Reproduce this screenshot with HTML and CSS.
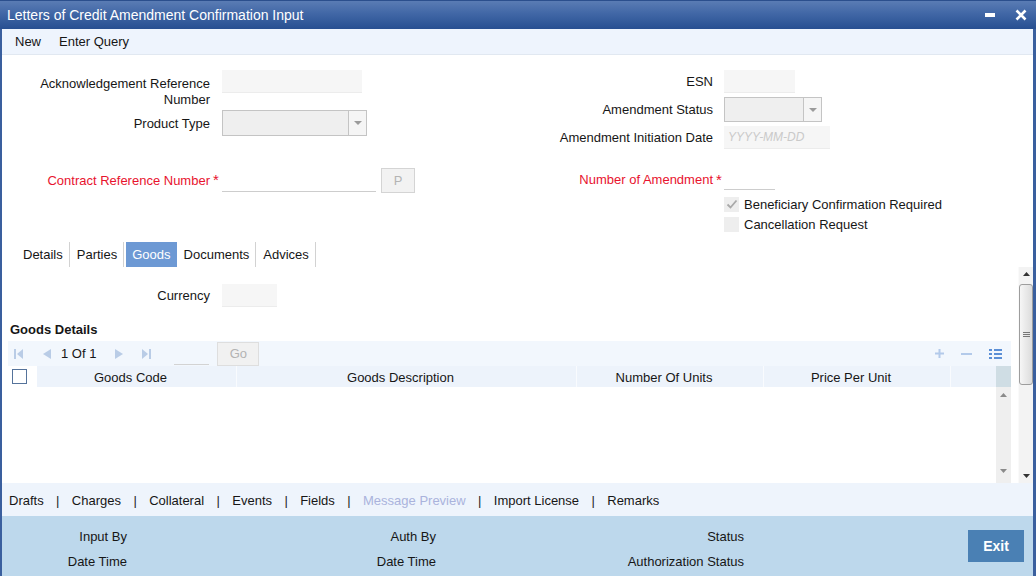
FILE: index.html
```html
<!DOCTYPE html>
<html lang="en">
<head>
  <meta charset="UTF-8">
  <meta name="viewport" content="width=device-width, initial-scale=1.0">
  <title>Letters of Credit Amendment Confirmation Input</title>
  <link rel="stylesheet" href="styles.css">
</head>
<body>
  <div class="window">
    <div class="titlebar">
      <span class="title">Letters of Credit Amendment Confirmation Input</span>
      <div class="win-buttons">
        <svg width="10" height="4" viewBox="0 0 10 4"><rect width="10" height="4" fill="#fff"/></svg>
        <svg width="12" height="12" viewBox="0 0 12 12"><path d="M1.5 1.5 L10.5 10.5 M10.5 1.5 L1.5 10.5" stroke="#fff" stroke-width="2.6"/></svg>
      </div>
    </div>

    <div class="frame">
      <div class="toolbar">
        <span>New</span>
        <span>Enter Query</span>
      </div>

      <div class="header-form">
        <div class="form-row">
          <div class="col col-left">
            <div class="field field-ack">
              <label class="lbl">Acknowledgement Reference<br>Number</label>
              <span class="mark"></span>
              <span class="input ack-input"></span>
            </div>
            <div class="field">
              <label class="lbl">Product Type</label>
              <span class="mark"></span>
              <span class="select product-select"><span class="select-btn"></span></span>
            </div>
          </div>
          <div class="col col-right">
            <div class="field">
              <label class="lbl">ESN</label>
              <span class="mark"></span>
              <span class="input esn-input"></span>
            </div>
            <div class="field">
              <label class="lbl">Amendment Status</label>
              <span class="mark"></span>
              <span class="select status-select"><span class="select-btn"></span></span>
            </div>
            <div class="field">
              <label class="lbl">Amendment Initiation Date</label>
              <span class="mark"></span>
              <span class="input date-input">YYYY-MM-DD</span>
            </div>
          </div>
        </div>

        <div class="form-row form-mid">
          <div class="col col-left">
            <div class="field">
              <label class="lbl required">Contract Reference Number</label>
              <span class="mark">*</span>
              <span class="line-input contract-input"></span>
              <span class="btn-p">P</span>
            </div>
          </div>
          <div class="col col-right">
            <div class="field">
              <label class="lbl required">Number of Amendment</label>
              <span class="mark">*</span>
              <span class="line-input amend-input"></span>
            </div>
            <div class="checks">
              <div class="check">
                <span class="cbox">
                  <svg width="12" height="10" viewBox="0 0 12 10"><path d="M1.5 5.5 L4.5 8.5 L10.5 1.5" stroke="#a9a9a9" stroke-width="1.8" fill="none"/></svg>
                </span>
                <span>Beneficiary Confirmation Required</span>
              </div>
              <div class="check">
                <span class="cbox"></span>
                <span>Cancellation Request</span>
              </div>
            </div>
          </div>
        </div>
      </div>

      <div class="tabs">
        <span class="tab">Details</span>
        <span class="tab">Parties</span>
        <span class="tab tab-active">Goods</span>
        <span class="tab">Documents</span>
        <span class="tab">Advices</span>
      </div>

      <div class="panel">
        <div class="panel-content">
          <div class="field currency-row">
            <label class="lbl">Currency</label>
            <span class="mark"></span>
            <span class="input currency-input"></span>
          </div>

          <h3 class="section-title">Goods Details</h3>

          <div class="grid">
            <div class="grid-toolbar">
              <svg class="pg-first" width="9" height="10" viewBox="0 0 9 10"><rect width="2" height="10" fill="#b9cce6"/><path d="M9 0 L3 5 L9 10Z" fill="#b9cce6"/></svg>
              <svg class="pg-prev" width="10" height="10" viewBox="0 0 10 10"><path d="M10 0 L2 5 L10 10Z" fill="#b9cce6"/></svg>
              <span class="pg-text">1 Of 1</span>
              <svg class="pg-next" width="9" height="10" viewBox="0 0 9 10"><path d="M0 0 L8 5 L0 10Z" fill="#b9cce6"/></svg>
              <svg class="pg-last" width="9" height="10" viewBox="0 0 9 10"><path d="M0 0 L6 5 L0 10Z" fill="#b9cce6"/><rect x="7" width="2" height="10" fill="#b9cce6"/></svg>
              <span class="pg-input"></span>
              <span class="btn-go">Go</span>

              <div class="grid-actions">
                <svg width="9" height="9" viewBox="0 0 9 9"><path d="M4.5 0 V9 M0 4.5 H9" stroke="#b3caea" stroke-width="2"/></svg>
                <svg width="11" height="2" viewBox="0 0 11 2"><rect width="11" height="2" fill="#b3caea"/></svg>
                <svg width="13" height="10" viewBox="0 0 13 10">
                  <rect x="0" y="0" width="3" height="2" fill="#5b8fd6"/><rect x="5" y="0" width="8" height="2" fill="#5b8fd6"/>
                  <rect x="0" y="4" width="3" height="2" fill="#5b8fd6"/><rect x="5" y="4" width="8" height="2" fill="#5b8fd6"/>
                  <rect x="0" y="8" width="3" height="2" fill="#5b8fd6"/><rect x="5" y="8" width="8" height="2" fill="#5b8fd6"/>
                </svg>
              </div>
            </div>

            <div class="grid-head">
              <span class="cell cell-check"><span class="hcheck"></span></span>
              <span class="cell cell-code">Goods Code</span>
              <span class="cell cell-desc">Goods Description</span>
              <span class="cell cell-units">Number Of Units</span>
              <span class="cell cell-price">Price Per Unit</span>
              <span class="cell cell-rest"></span>
              <span class="cell cell-scroll"></span>
            </div>

            <div class="grid-body">
              <div class="grid-rows"></div>
              <div class="grid-scroll">
                <svg width="7" height="4" viewBox="0 0 7 4"><path d="M0 4 L3.5 0 L7 4Z" fill="#8a8a8a"/></svg>
                <svg width="7" height="4" viewBox="0 0 7 4"><path d="M0 0 L3.5 4 L7 0Z" fill="#8a8a8a"/></svg>
              </div>
            </div>
          </div>
        </div>

        <div class="vscroll">
          <span class="vs-btn"><svg width="7" height="4" viewBox="0 0 7 4"><path d="M0 4 L3.5 0 L7 4Z" fill="#333"/></svg></span>
          <span class="vs-thumb">
            <svg width="7" height="6" viewBox="0 0 7 6"><path d="M0 0.5 H7 M0 2.5 H7 M0 4.5 H7" stroke="#777" stroke-width="1"/></svg>
          </span>
          <span class="vs-space"></span>
          <span class="vs-btn"><svg width="7" height="4" viewBox="0 0 7 4"><path d="M0 0 L3.5 4 L7 0Z" fill="#333"/></svg></span>
        </div>
      </div>

      <div class="links">
        <span>Drafts</span><span class="sep">|</span>
        <span>Charges</span><span class="sep">|</span>
        <span>Collateral</span><span class="sep">|</span>
        <span>Events</span><span class="sep">|</span>
        <span>Fields</span><span class="sep">|</span>
        <span class="disabled">Message Preview</span><span class="sep">|</span>
        <span>Import License</span><span class="sep">|</span>
        <span>Remarks</span>
      </div>

      <div class="audit">
        <div class="audit-grid">
          <span>Input By</span>
          <span>Auth By</span>
          <span>Status</span>
          <span>Date Time</span>
          <span>Date Time</span>
          <span>Authorization Status</span>
        </div>
        <button class="btn-exit">Exit</button>
      </div>
    </div>
  </div>
</body>
</html>
```

FILE: styles.css
```css
* {
  margin: 0;
  padding: 0;
  box-sizing: border-box;
}

body {
  font-family: "Liberation Sans", Arial, sans-serif;
  font-size: 13px;
  color: #161616;
  background: #fff;
}

.window {
  width: 1036px;
  height: 576px;
  display: flex;
  flex-direction: column;
  overflow: hidden;
}

/* title bar */
.titlebar {
  height: 29px;
  flex: none;
  display: flex;
  align-items: center;
  justify-content: space-between;
  padding: 0 9px 0 7px;
  background: linear-gradient(to bottom, #5a7cb4 0%, #4167a6 45%, #274f91 100%);
  border-top: 1px solid #2b4f8d;
}

.title {
  color: #fff;
  font-size: 14px;
}

.win-buttons {
  display: flex;
  align-items: center;
  gap: 20px;
}

.frame {
  flex: 1;
  min-height: 0;
  display: flex;
  flex-direction: column;
  border-left: 2px solid #3a5f9e;
  border-right: 3px solid #3a5f9e;
}

.toolbar {
  height: 26px;
  flex: none;
  display: flex;
  align-items: center;
  gap: 18px;
  padding-left: 13px;
  background: #eef4fd;
  border-bottom: 1px solid #e1e8f1;
}

/* header form */
.header-form {
  flex: none;
  padding-top: 15px;
}

.form-row {
  display: flex;
  align-items: flex-start;
}

.form-mid {
  margin-top: 19px;
}

.col {
  display: flex;
  flex-direction: column;
  gap: 4px;
}

.col-left {
  width: 511px;
}

.field {
  display: flex;
  align-items: center;
}

.lbl {
  width: 208px;
  flex: none;
  text-align: right;
}

.col-right .lbl {
  width: 200px;
}

.mark {
  width: 12px;
  flex: none;
  align-self: flex-start;
  padding: 4px 0 0 3px;
  color: #e8132e;
  font-size: 15px;
  line-height: 1;
}

.col-right .mark {
  width: 11px;
}

.required {
  color: #e8132e;
}

.field-ack {
  align-items: flex-start;
  height: 36px;
}

.field-ack .lbl {
  line-height: 16px;
  padding-top: 6px;
}

.input {
  display: block;
  height: 23px;
  background: #f6f6f6;
  border-bottom: 1px solid #ececec;
}

.ack-input { width: 140px; }
.esn-input { width: 71px; }
.currency-input { width: 55px; }

.date-input {
  width: 106px;
  padding-left: 4px;
  line-height: 23px;
  font-size: 12px;
  font-style: italic;
  color: #cacaca;
}

.select {
  display: flex;
  justify-content: flex-end;
  height: 26px;
  background: #efefef;
  border: 1px solid #c4c4c4;
}

.product-select { width: 145px; }
.status-select { width: 98px; height: 25px; }

.select-btn {
  width: 18px;
  display: flex;
  align-items: center;
  justify-content: center;
  background: #f5f5f5;
  border-left: 1px solid #c4c4c4;
}

.select-btn::after {
  content: "";
  border-left: 4px solid transparent;
  border-right: 4px solid transparent;
  border-top: 4px solid #9b9b9b;
}

.line-input {
  display: block;
  height: 22px;
  border-bottom: 1px solid #cdcdcd;
}

.contract-input { width: 154px; }
.amend-input { width: 51px; }

.btn-p {
  width: 34px;
  height: 25px;
  margin-left: 5px;
  background: #f2f2f2;
  border: 1px solid #d4d4d4;
  color: #b4b4b4;
  line-height: 23px;
  text-align: center;
}

.checks {
  padding-left: 211px;
}

.check {
  height: 20px;
  display: flex;
  align-items: center;
  gap: 5px;
}

.cbox {
  width: 15px;
  height: 15px;
  display: flex;
  align-items: center;
  justify-content: center;
  background: #eeeeee;
}

/* tabs */
.tabs {
  flex: none;
  display: flex;
  height: 25px;
  margin-top: 8px;
  padding-left: 14px;
}

.tab {
  padding: 1px 6px 0 7px;
  line-height: 24px;
  border-right: 1px solid #d2d2d2;
}

.tab-active {
  margin-left: 2px;
  padding: 1px 6px 0;
  background: #6d99d4;
  color: #fff;
  border-right: none;
}

/* scroll panel */
.panel {
  flex: 1;
  min-height: 0;
  display: flex;
}

.panel-content {
  flex: 1;
  overflow: hidden;
  padding-top: 17px;
}

.section-title {
  margin: 15px 0 3px 8px;
  font-size: 13px;
  line-height: 16px;
}

.grid {
  margin: 0 7px 0 6px;
}

.grid-toolbar {
  height: 25px;
  display: flex;
  align-items: center;
  padding-left: 6px;
  background: #f2f7fd;
}

.pg-prev { margin-left: 18px; }
.pg-text { margin-left: 10px; }
.pg-next { margin-left: 19px; }
.pg-last { margin-left: 18px; }

.pg-input {
  width: 35px;
  height: 22px;
  margin-left: 23px;
  border-bottom: 1px solid #d3d3d3;
}

.btn-go {
  width: 42px;
  height: 24px;
  margin-left: 8px;
  background: #f1f1f1;
  border: 1px solid #dedede;
  color: #b3b3b3;
  line-height: 22px;
  text-align: center;
}

.grid-actions {
  margin-left: auto;
  padding-right: 9px;
  display: flex;
  align-items: center;
  gap: 17px;
}

.grid-head {
  height: 21px;
  display: flex;
  background: #edf3fb;
}

.cell {
  display: flex;
  align-items: center;
  justify-content: center;
  padding: 1px 12px 0 0;
  border-right: 1px solid #f9fbfe;
}

.cell-check {
  width: 29px;
  padding: 0 0 0 4px;
  justify-content: flex-start;
  background: #fff;
  border-right: none;
}

.hcheck {
  width: 15px;
  height: 15px;
  background: #fff;
  border: 1px solid #55739b;
}

.cell-code { width: 200px; }
.cell-desc { width: 340px; }
.cell-units { width: 187px; }
.cell-price { width: 187px; }
.cell-rest { width: 45px; border-right: none; }

.cell-scroll {
  width: 15px;
  padding: 0;
  border-right: none;
  background: #cfdde4;
}

.grid-body {
  height: 100px;
  display: flex;
}

.grid-rows {
  flex: 1;
  background: #fff;
}

.grid-scroll {
  width: 15px;
  display: flex;
  flex-direction: column;
  align-items: center;
  justify-content: space-between;
  padding: 6px 0 14px;
  background: #efefef;
}

.vscroll {
  width: 15px;
  flex: none;
  display: flex;
  flex-direction: column;
  align-items: center;
  background: #f3f3f3;
  border-left: 1px solid #fafafa;
}

.vs-btn {
  height: 14px;
  display: flex;
  align-items: center;
  justify-content: center;
}

.vs-thumb {
  width: 14px;
  height: 101px;
  margin-top: 3px;
  display: flex;
  align-items: center;
  justify-content: center;
  border: 1px solid #9d9d9d;
  border-radius: 3px;
  background: linear-gradient(to right, #f6f6f6, #dcdcdc);
}

.vs-space {
  flex: 1;
}

/* footer links */
.links {
  height: 33px;
  flex: none;
  display: flex;
  align-items: center;
  gap: 12.4px;
  padding: 1px 0 0 7px;
  background: #eef4fc;
}

.sep {
  color: #222;
}

.disabled {
  color: #aab3dc;
}

/* audit bar */
.audit {
  height: 60px;
  flex: none;
  display: flex;
  background: #bdd8ec;
}

.audit-grid {
  display: grid;
  grid-template-columns: 125px 309px 308px;
  grid-auto-rows: 25px;
  align-content: start;
  padding-top: 8px;
  line-height: 25px;
  text-align: right;
}

.btn-exit {
  width: 56px;
  height: 32px;
  margin: 14px 9px 0 auto;
  border: none;
  background: #4a80b4;
  color: #fff;
  font-family: "Liberation Sans", Arial, sans-serif;
  font-size: 14px;
  font-weight: bold;
}
```
